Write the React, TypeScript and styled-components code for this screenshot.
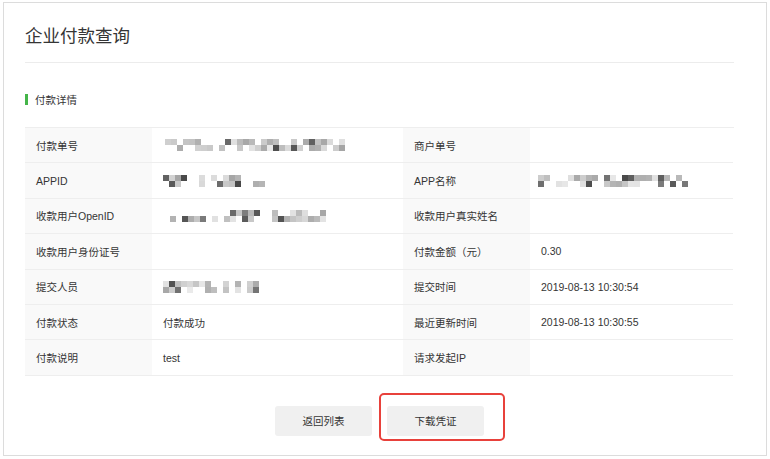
import React from 'react'
import styled, { createGlobalStyle } from 'styled-components'

const GlobalStyle = createGlobalStyle`
  html, body {
    margin: 0;
    padding: 0;
    background: #fff;
  }
  body {
    font-family: "Liberation Sans", "Noto Sans CJK SC", sans-serif;
    color: #353535;
  }
`

const StyledPanel = styled.div`
  margin: 2px 3px 0;
  width: 764px;
  height: 454px;
  box-sizing: border-box;
  border: 1px solid #dcdcdc;
  padding: 0 32px 0 21px;
  display: flex;
  flex-direction: column;
`

const StyledHeader = styled.div`
  height: 60px;
  box-sizing: border-box;
  padding-top: 4px;
  display: flex;
  align-items: center;
  border-bottom: 1px solid #ececec;
  h1 {
    margin: 0;
    font-size: 17.5px;
    font-weight: normal;
    color: #353535;
  }
`

const StyledSectionTitle = styled.div`
  height: 64px;
  box-sizing: border-box;
  padding-top: 8px;
  display: flex;
  align-items: center;
  font-size: 10.5px;
  color: #353535;
  &::before {
    content: '';
    width: 3px;
    height: 11px;
    background: #44b549;
    margin-right: 7px;
  }
`

const StyledTable = styled.div`
  display: grid;
  grid-template-columns: 127px 251px 127px 203px;
  border-top: 1px solid #eeeeee;
`

const StyledCell = styled.div<{ $label?: boolean }>`
  height: 35.4px;
  box-sizing: border-box;
  border-bottom: 1px solid #eeeeee;
  background: ${(p) => (p.$label ? '#f9f9f9' : '#fff')};
  padding: 0 11px;
  display: flex;
  align-items: center;
  font-size: 10.5px;
  color: #353535;
  white-space: nowrap;
`

const StyledActions = styled.div`
  display: flex;
  justify-content: center;
  gap: 15px;
  margin-top: 30px;
`

const StyledButton = styled.button<{ $marked?: boolean }>`
  position: relative;
  width: 97px;
  height: 30px;
  border: 0;
  border-radius: 3px;
  background: #f0f0f0;
  font-family: "Liberation Sans", "Noto Sans CJK SC", sans-serif;
  font-size: 10.5px;
  color: #353535;
  cursor: pointer;
  ${(p) =>
    p.$marked &&
    `
    &::after {
      content: '';
      position: absolute;
      top: -13px;
      left: -8px;
      right: -21px;
      bottom: -5px;
      border: 2px solid #e8413b;
      border-radius: 5px;
    }
  `}
`

// pixelated placeholder for masked values
const Mosaic = ({ cells, seed, offset = 0 }: { cells: number; seed: number; offset?: number }) => {
  const size = 6
  let s = seed >>> 0
  const rnd = () => {
    s = (s + 0x6d2b79f5) >>> 0
    let t = s
    t = Math.imul(t ^ (t >>> 15), t | 1)
    t ^= t + Math.imul(t ^ (t >>> 7), t | 61)
    return ((t ^ (t >>> 14)) >>> 0) / 4294967296
  }
  const rects: React.ReactNode[] = []
  for (let r = 0; r < 2; r++) {
    for (let c = 0; c < cells; c++) {
      if (rnd() < 0.4) continue
      const dark = rnd() < 0.25
      const shade = dark ? Math.floor(70 + rnd() * 60) : Math.floor(165 + rnd() * 70)
      rects.push(
        <rect
          key={r + '-' + c}
          x={c * size}
          y={r * size}
          width={size}
          height={size}
          fill={`rgb(${shade},${shade},${shade})`}
        />
      )
    }
  }
  return (
    <svg
      width={cells * size}
      height={size * 2}
      style={{ marginLeft: offset }}
      shapeRendering="crispEdges"
    >
      {rects}
    </svg>
  )
}

type Row = [string, React.ReactNode, string, React.ReactNode]

const rows: Row[] = [
  ['付款单号', <Mosaic cells={30} seed={11} offset={2} />, '商户单号', ''],
  ['APPID', <Mosaic cells={17} seed={47} />, 'APP名称', <Mosaic cells={25} seed={83} offset={-3} />],
  ['收款用户OpenID', <Mosaic cells={26} seed={29} offset={7} />, '收款用户真实姓名', ''],
  ['收款用户身份证号', '', '付款金额（元）', '0.30'],
  ['提交人员', <Mosaic cells={17} seed={61} />, '提交时间', '2019-08-13 10:30:54'],
  ['付款状态', '付款成功', '最近更新时间', '2019-08-13 10:30:55'],
  ['付款说明', 'test', '请求发起IP', ''],
]

const App = () => {
  return (
    <>
      <GlobalStyle />
      <StyledPanel>
        <StyledHeader>
          <h1>企业付款查询</h1>
        </StyledHeader>
        <StyledSectionTitle>付款详情</StyledSectionTitle>
        <StyledTable>
          {rows.map((row, i) => (
            <React.Fragment key={i}>
              <StyledCell $label>{row[0]}</StyledCell>
              <StyledCell>{row[1]}</StyledCell>
              <StyledCell $label>{row[2]}</StyledCell>
              <StyledCell>{row[3]}</StyledCell>
            </React.Fragment>
          ))}
        </StyledTable>
        <StyledActions>
          <StyledButton>返回列表</StyledButton>
          <StyledButton $marked>下载凭证</StyledButton>
        </StyledActions>
      </StyledPanel>
    </>
  )
}

export default App
